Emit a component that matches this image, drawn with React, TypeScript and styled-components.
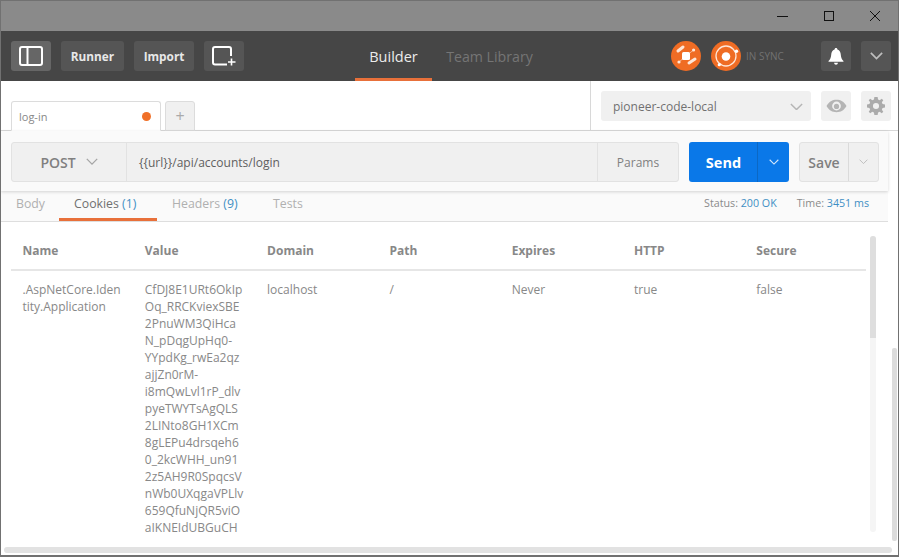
import React from "react";
import styled, { createGlobalStyle } from "styled-components";

const GlobalStyle = createGlobalStyle`
  html, body {
    margin: 0;
    padding: 0;
    background: #fff;
  }
  * { box-sizing: border-box; }
`;

const Chevron = ({ size = 12, color = "#fff", weight = 1.5 }: { size?: number; color?: string; weight?: number }) => (
  <svg width={size} height={size * 0.6} viewBox="0 0 12 7" fill="none">
    <path d="M0.8 0.8 L6 6 L11.2 0.8" stroke={color} strokeWidth={weight} />
  </svg>
);

const BellIcon = () => (
  <svg width="16" height="19" viewBox="0 0 18 20">
    <path d="M9 0.5 C10 0.5 10.6 1.2 10.6 2.2 C13.2 3 14.2 5.2 14.4 8 C14.6 11 15.4 13 17.4 15 V16 H0.6 V15 C2.6 13 3.4 11 3.6 8 C3.8 5.2 4.8 3 7.4 2.2 C7.4 1.2 8 0.5 9 0.5 Z" fill="#fff" />
    <path d="M6.8 17 H11.2 C11 18.4 10.2 19.2 9 19.2 C7.8 19.2 7 18.4 6.8 17 Z" fill="#fff" />
  </svg>
);

const EyeIcon = () => (
  <svg width="21" height="14" viewBox="0 0 21 14">
    <path d="M0.5 7 C3 2.6 6.4 0.8 10.5 0.8 C14.6 0.8 18 2.6 20.5 7 C18 11.4 14.6 13.2 10.5 13.2 C6.4 13.2 3 11.4 0.5 7 Z" fill="#b4b4b4" />
    <circle cx="10.5" cy="7" r="4.4" fill="#f0f0f0" />
    <circle cx="10.5" cy="7.4" r="2.6" fill="#b4b4b4" />
  </svg>
);

const GearIcon = () => (
  <svg width="18" height="18" viewBox="0 0 20 20">
    <path
      fill="#ababab"
      fillRule="evenodd"
      d="M8.2 0 H11.8 L12.3 2.7 L14.1 3.5 L16.4 1.9 L18.1 3.6 L16.5 5.9 L17.3 7.7 L20 8.2 V11.8 L17.3 12.3 L16.5 14.1 L18.1 16.4 L16.4 18.1 L14.1 16.5 L12.3 17.3 L11.8 20 H8.2 L7.7 17.3 L5.9 16.5 L3.6 18.1 L1.9 16.4 L3.5 14.1 L2.7 12.3 L0 11.8 V8.2 L2.7 7.7 L3.5 5.9 L1.9 3.6 L3.6 1.9 L5.9 3.5 L7.7 2.7 Z M10 6.6 A3.4 3.4 0 1 0 10 13.4 A3.4 3.4 0 1 0 10 6.6 Z"
    />
  </svg>
);

const columns = ["Name", "Value", "Domain", "Path", "Expires", "HTTP", "Secure"];

const valueLines = [
  "CfDJ8E1URt6OkIp",
  "Oq_RRCKviexSBE",
  "2PnuWM3QiHca",
  "N_pDqgUpHq0-",
  "YYpdKg_rwEa2qz",
  "ajjZn0rM-",
  "i8mQwLvl1rP_dlv",
  "pyeTWYTsAgQLS",
  "2LINto8GH1XCm",
  "8gLEPu4drsqeh6",
  "0_2kcWHH_un91",
  "2z5AH9R0SpqcsV",
  "nWb0UXqgaVPLlv",
  "659QfuNjQR5viO",
  "aIKNEIdUBGuCH",
];

const App = () => {
  return (
    <>
      <GlobalStyle />
      <Frame>
        <TitleBar>
          <WinButton>
            <svg width="12" height="12" viewBox="0 0 12 12"><path d="M0 6.5 H11" stroke="#111" strokeWidth="1" /></svg>
          </WinButton>
          <WinButton>
            <svg width="12" height="12" viewBox="0 0 12 12"><rect x="1.5" y="1.5" width="9" height="9" fill="none" stroke="#111" strokeWidth="1" /></svg>
          </WinButton>
          <WinButton>
            <svg width="12" height="12" viewBox="0 0 12 12"><path d="M1 1 L11 11 M11 1 L1 11" stroke="#111" strokeWidth="1" /></svg>
          </WinButton>
        </TitleBar>

        <Header>
          <HeaderLeft>
            <HeadButton $w={40} $active>
              <svg width="24" height="20" viewBox="0 0 24 20" fill="none">
                <rect x="1" y="1" width="22" height="18" rx="2" stroke="#fff" strokeWidth="2" />
                <path d="M8.5 1 V19" stroke="#fff" strokeWidth="2" />
              </svg>
            </HeadButton>
            <HeadButton $w={63}>Runner</HeadButton>
            <HeadButton $w={60}>Import</HeadButton>
            <HeadButton $w={40}>
              <svg width="24" height="20" viewBox="0 0 24 20" fill="none">
                <path d="M15 18.5 H3 a2 2 0 0 1 -2 -2 V3 a2 2 0 0 1 2 -2 H17 a2 2 0 0 1 2 2 V10" stroke="#fff" strokeWidth="2" />
                <path d="M19.5 12.5 V19.5 M16 16 H23.5" stroke="#fff" strokeWidth="1.6" />
              </svg>
            </HeadButton>
          </HeaderLeft>

          <HeaderTabs>
            <HeaderTab $active>Builder</HeaderTab>
            <HeaderTab>Team Library</HeaderTab>
          </HeaderTabs>

          <HeaderRight>
            <StatusCircle>
              <svg width="24" height="24" viewBox="0 0 24 24" fill="none">
                <path d="M12 12 L19.6 6 M12 12 L5 18" stroke="#f7b48d" strokeWidth="1" />
                <path d="M4 7 L9 3 M15 19 L21 15" stroke="#fde6d8" strokeWidth="3" strokeLinecap="round" />
                <circle cx="19.6" cy="6" r="1.6" fill="#fde6d8" />
                <circle cx="5" cy="18" r="1.6" fill="#fde6d8" />
                <rect x="8" y="8" width="8" height="8" rx="1.5" fill="#fff" />
              </svg>
            </StatusCircle>
            <StatusCircle>
              <svg width="28" height="28" viewBox="0 0 28 28" fill="none">
                <circle cx="14" cy="14" r="10" stroke="#fde6d8" strokeWidth="1.3" />
                <circle cx="14" cy="14.5" r="4.3" fill="#fff" />
                <circle cx="24.5" cy="9.3" r="1.7" fill="#fff" />
                <circle cx="7.3" cy="22.7" r="1.6" fill="#fff" />
              </svg>
            </StatusCircle>
            <SyncLabel>IN SYNC</SyncLabel>
            <HeadButton $w={30}>
              <BellIcon />
            </HeadButton>
            <HeadButton $w={30}>
              <Chevron size={13} color="#bdbdbd" weight={1.6} />
            </HeadButton>
          </HeaderRight>
        </Header>

        <TabRow>
          <TabStrip>
            <RequestTab>
              log-in
              <UnsavedDot />
            </RequestTab>
            <AddTab>+</AddTab>
          </TabStrip>
          <EnvPanel>
            <EnvSelect>
              pioneer-code-local
              <Chevron size={13} color="#b5b5b5" weight={1.3} />
            </EnvSelect>
            <EnvButton>
              <EyeIcon />
            </EnvButton>
            <EnvButton>
              <GearIcon />
            </EnvButton>
          </EnvPanel>
        </TabRow>

        <RequestRow>
          <UrlBar>
            <MethodPicker>
              POST
              <Chevron size={12} color="#a5a5a5" weight={1.3} />
            </MethodPicker>
            <UrlInput>{"{{url}}/api/accounts/login"}</UrlInput>
            <ParamsButton>Params</ParamsButton>
          </UrlBar>
          <SendButton>
            <SendLabel>Send</SendLabel>
            <SendCaret>
              <Chevron size={10} color="#d6e8fb" weight={1.3} />
            </SendCaret>
          </SendButton>
          <SaveButton>
            <SaveLabel>Save</SaveLabel>
            <SaveCaret>
              <Chevron size={9} color="#b5b5b5" weight={1.1} />
            </SaveCaret>
          </SaveButton>
        </RequestRow>

        <ResponseBar>
          <ResponseTabs>
            <ResponseTab $w={48} $pad={5}>Body</ResponseTab>
            <ResponseTab $w={98} $pad={15} $active>
              Cookies <Count>(1)</Count>
            </ResponseTab>
            <ResponseTab $w={101} $pad={15}>
              Headers <Count>(9)</Count>
            </ResponseTab>
            <ResponseTab $w={70} $pad={15}>Tests</ResponseTab>
          </ResponseTabs>
          <Metrics>
            <span>Status: <Count>200 OK</Count></span>
            <span>Time: <Count>3451 ms</Count></span>
          </Metrics>
        </ResponseBar>

        <TableArea>
          <HeadRow>
            {columns.map((col) => (
              <HeadCell key={col}>{col}</HeadCell>
            ))}
          </HeadRow>
          <BodyRow>
            <Cell>
              <div>.AspNetCore.Iden</div>
              <div>tity.Application</div>
            </Cell>
            <Cell>
              {valueLines.map((line) => (
                <div key={line}>{line}</div>
              ))}
            </Cell>
            <Cell>localhost</Cell>
            <Cell>/</Cell>
            <Cell>Never</Cell>
            <Cell>true</Cell>
            <Cell>false</Cell>
          </BodyRow>
          <InnerScroll>
            <InnerThumb />
          </InnerScroll>
        </TableArea>

        <OuterScroll />
        <BottomScroll />
      </Frame>
    </>
  );
};

export default App;

const Frame = styled.div`
  position: relative;
  display: flex;
  flex-direction: column;
  width: 899px;
  height: 557px;
  overflow: hidden;
  background: #fff;
  border: 1px solid #717171;
  border-bottom-width: 2px;
  font-family: "Open Sans", "Liberation Sans", sans-serif;
  color: #888888;
`;

const TitleBar = styled.div`
  display: flex;
  justify-content: flex-end;
  flex: 0 0 30px;
  background: #8a8a8a;
`;

const WinButton = styled.div`
  display: flex;
  align-items: center;
  justify-content: center;
  width: 46px;
  height: 30px;
`;

const Header = styled.div`
  display: flex;
  align-items: center;
  justify-content: space-between;
  flex: 0 0 50px;
  padding: 0 7px 0 10px;
  background: #464646;
  position: relative;
`;

const HeaderLeft = styled.div`
  display: flex;
  gap: 10px;
`;

const HeadButton = styled.div<{ $w: number; $active?: boolean }>`
  display: flex;
  align-items: center;
  justify-content: center;
  width: ${(p) => p.$w}px;
  height: 30px;
  border-radius: 3px;
  background: ${(p) => (p.$active ? "#666666" : "#555555")};
  color: #e8e8e8;
  font-size: 11.8px;
  font-weight: 700;
`;

const HeaderTabs = styled.div`
  position: absolute;
  left: 354px;
  top: 0;
  display: flex;
  height: 50px;
`;

const HeaderTab = styled.div<{ $active?: boolean }>`
  display: flex;
  align-items: center;
  justify-content: center;
  width: ${(p) => (p.$active ? 77 : 115)}px;
  padding-top: 3px;
  font-size: ${(p) => (p.$active ? 14.5 : 14.2)}px;
  font-weight: ${(p) => (p.$active ? 500 : 400)};
  color: ${(p) => (p.$active ? "#ececec" : "#757575")};
  border-bottom: 3px solid ${(p) => (p.$active ? "#e8703a" : "transparent")};
`;

const HeaderRight = styled.div`
  display: flex;
  align-items: center;
  gap: 10px;
`;

const StatusCircle = styled.div`
  display: flex;
  align-items: center;
  justify-content: center;
  width: 30px;
  height: 30px;
  border-radius: 50%;
  background: #ef6c24;
`;

const SyncLabel = styled.div`
  width: 65px;
  margin-left: -5px;
  font-size: 10px;
  font-weight: 400;
  color: #727272;
`;

const TabRow = styled.div`
  display: flex;
  justify-content: space-between;
  flex: 0 0 50px;
  border-bottom: 1px solid #d8d8d8;
`;

const TabStrip = styled.div`
  display: flex;
  align-items: flex-end;
  gap: 4px;
  padding-left: 10px;
  margin-bottom: -1px;
`;

const RequestTab = styled.div`
  display: flex;
  align-items: center;
  justify-content: space-between;
  width: 150px;
  height: 30px;
  padding: 0 9px 0 7px;
  background: #fff;
  border: 1px solid #dcdcdc;
  border-bottom-color: #fff;
  border-radius: 3px 3px 0 0;
  font-size: 11px;
`;

const UnsavedDot = styled.span`
  width: 9px;
  height: 9px;
  border-radius: 50%;
  background: #f07028;
`;

const AddTab = styled.div`
  display: flex;
  align-items: center;
  justify-content: center;
  width: 30px;
  height: 30px;
  background: #f0f0f0;
  border: 1px solid #dcdcdc;
  border-radius: 3px 3px 0 0;
  color: #aaa;
  font-size: 16px;
`;

const EnvPanel = styled.div`
  display: flex;
  align-items: center;
  gap: 10px;
  width: 308px;
  padding: 1px 7px 0 10px;
  border-left: 1px solid #d8d8d8;
`;

const EnvSelect = styled.div`
  display: flex;
  align-items: center;
  justify-content: space-between;
  width: 210px;
  height: 30px;
  padding: 1px 8px 0 12px;
  background: #f0f0f0;
  border-radius: 3px;
  font-size: 12px;
  color: #707070;
`;

const EnvButton = styled.div`
  display: flex;
  align-items: center;
  justify-content: center;
  width: 30px;
  height: 30px;
  background: #f0f0f0;
  border-radius: 3px;
`;

const RequestRow = styled.div`
  display: flex;
  align-items: flex-start;
  flex: 0 0 60px;
  padding: 11px 0 0 10px;
  margin-right: 10px;
  background: #fafafa;
  box-shadow: 0 1px 3px rgba(0, 0, 0, 0.16);
  position: relative;
  z-index: 1;
`;

const UrlBar = styled.div`
  display: flex;
  width: 668px;
  height: 40px;
  background: #f0f0f0;
  border: 1px solid #e2e2e2;
  border-radius: 3px;
`;

const MethodPicker = styled.div`
  display: flex;
  align-items: center;
  justify-content: center;
  gap: 10px;
  width: 115px;
  font-size: 14px;
  font-weight: 600;
  color: #808080;
  border-right: 1px solid #e2e2e2;
`;

const UrlInput = styled.div`
  display: flex;
  align-items: center;
  flex: 1;
  padding-left: 12px;
  font-size: 12px;
  color: #606060;
`;

const ParamsButton = styled.div`
  display: flex;
  align-items: center;
  justify-content: center;
  width: 81px;
  font-size: 12px;
  color: #808080;
  border-left: 1px solid #e2e2e2;
`;

const SendButton = styled.div`
  display: flex;
  width: 100px;
  height: 40px;
  margin-left: 10px;
  background: #0a78e8;
  border-radius: 3px;
`;

const SendLabel = styled.div`
  display: flex;
  align-items: center;
  justify-content: center;
  width: 69px;
  padding-left: 1px;
  font-size: 14.5px;
  font-weight: 700;
  color: #fff;
  border-right: 1px solid #0c68c4;
`;

const SendCaret = styled.div`
  display: flex;
  align-items: center;
  justify-content: center;
  flex: 1;
`;

const SaveButton = styled.div`
  display: flex;
  width: 80px;
  height: 40px;
  margin-left: 10px;
  background: #f0f0f0;
  border: 1px solid #e2e2e2;
  border-radius: 3px;
`;

const SaveLabel = styled.div`
  display: flex;
  align-items: center;
  justify-content: center;
  width: 49px;
  font-size: 14px;
  font-weight: 600;
  color: #808080;
  border-right: 1px solid #dadada;
`;

const SaveCaret = styled.div`
  display: flex;
  align-items: center;
  justify-content: center;
  flex: 1;
`;

const ResponseBar = styled.div`
  display: flex;
  justify-content: space-between;
  flex: 0 0 30px;
  margin-right: 10px;
  background: #fafafa;
  border-bottom: 1px solid #dedede;
`;

const ResponseTabs = styled.div`
  display: flex;
  padding-left: 10px;
`;

const ResponseTab = styled.div<{ $w: number; $pad: number; $active?: boolean }>`
  width: ${(p) => p.$w}px;
  height: 30px;
  padding: 4px 0 0 ${(p) => p.$pad}px;
  font-size: 12.3px;
  white-space: pre;
  color: ${(p) => (p.$active ? "#707070" : "#b0b0b0")};
  border-bottom: 3px solid ${(p) => (p.$active ? "#e8703a" : "transparent")};
`;

const Count = styled.span`
  color: #3f8fc4;
`;

const Metrics = styled.div`
  display: flex;
  gap: 20px;
  padding: 5px 19px 0 0;
  font-size: 10.7px;
  color: #8a8a8a;
`;

const TableArea = styled.div`
  position: relative;
  flex: 1;
  padding: 0 32px 0 10px;
  overflow: hidden;
`;

const HeadRow = styled.div`
  display: grid;
  grid-template-columns: repeat(7, 122.3px);
  height: 49px;
  padding-top: 20px;
  border-bottom: 2px solid #e6e6e6;
`;

const HeadCell = styled.div`
  padding-left: 11.5px;
  font-size: 12px;
  font-weight: 700;
  line-height: 17px;
  color: #888888;
`;

const BodyRow = styled.div`
  display: grid;
  grid-template-columns: repeat(7, 122.3px);
  padding-top: 10px;
`;

const Cell = styled.div`
  padding-left: 11.5px;
  font-size: 12px;
  line-height: 17px;
  color: #888888;
  white-space: nowrap;
`;

const InnerScroll = styled.div`
  position: absolute;
  left: 869px;
  top: 14px;
  width: 6px;
  height: 296px;
  background: #f5f5f5;
  border-radius: 3px;
`;

const InnerThumb = styled.div`
  height: 102px;
  background: #dedede;
  border-radius: 3px 3px 0 0;
`;

const OuterScroll = styled.div`
  position: absolute;
  left: 891px;
  top: 347px;
  width: 5px;
  height: 193px;
  background: #dcdcdc;
  border-radius: 2px;
`;

const BottomScroll = styled.div`
  position: absolute;
  left: 3px;
  bottom: 2px;
  width: 888px;
  height: 6px;
  background: #e2e2e2;
  border-radius: 3px;
`;
